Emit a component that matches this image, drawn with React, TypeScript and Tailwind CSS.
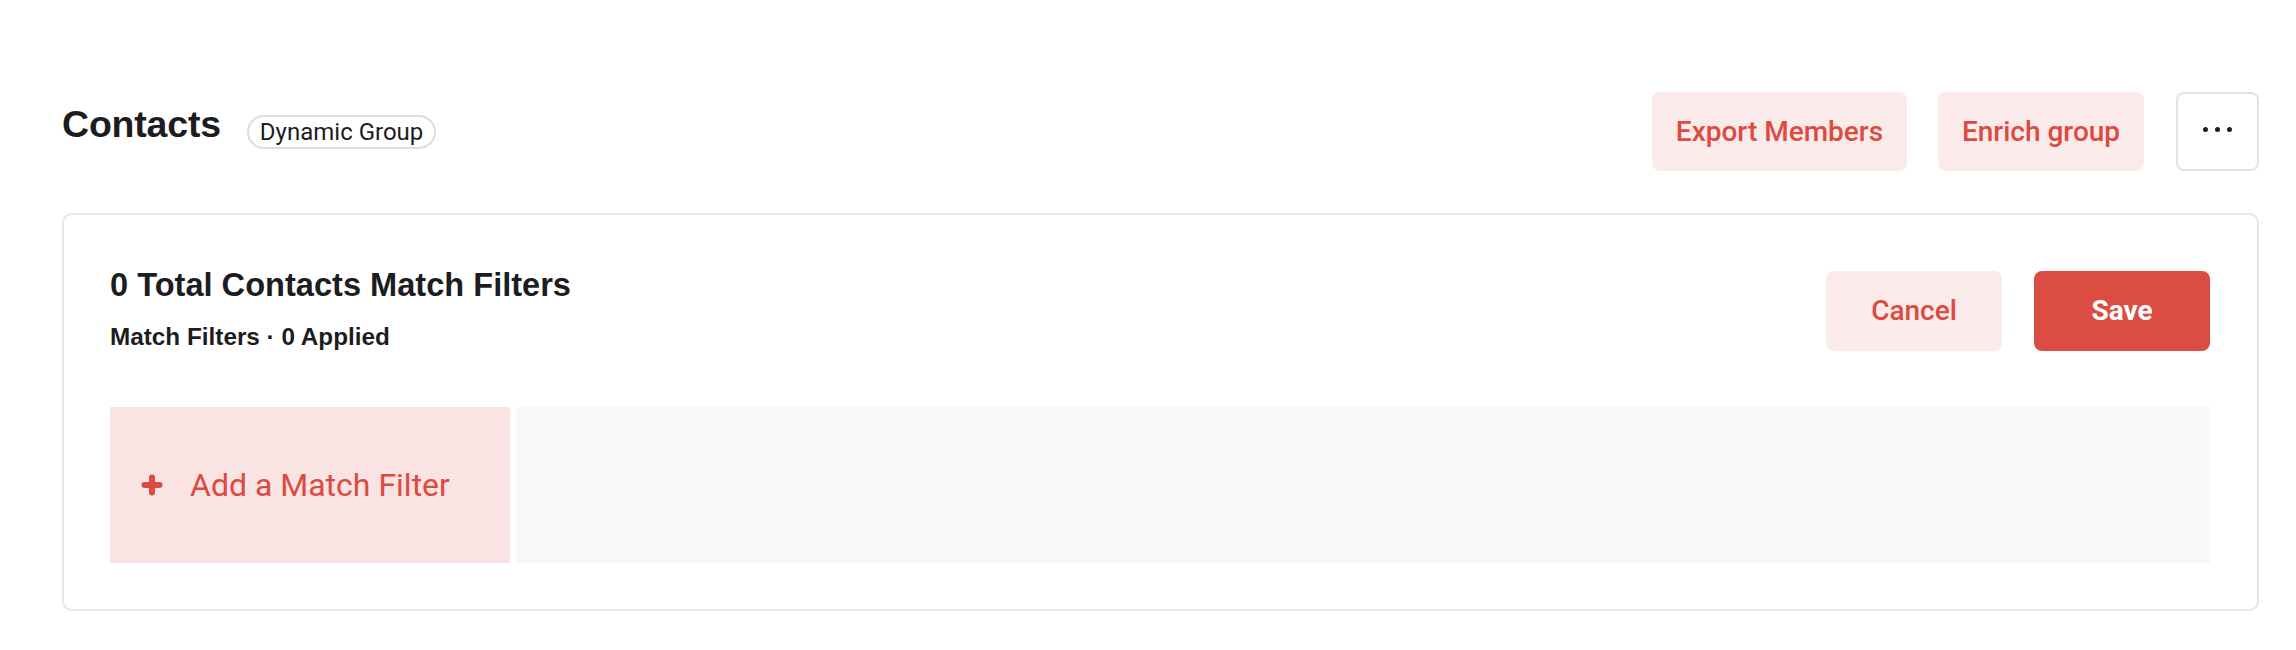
const heading = { fontFamily: '"Liberation Sans", Arial, sans-serif' };
const body = { fontFamily: 'Roboto, "Liberation Sans", sans-serif' };

function DotsIcon() {
  return (
    <div className="flex items-center gap-[7px] mb-[4px]">
      <span className="h-[5px] w-[5px] rounded-full bg-[#1f1f23]" />
      <span className="h-[5px] w-[5px] rounded-full bg-[#1f1f23]" />
      <span className="h-[5px] w-[5px] rounded-full bg-[#1f1f23]" />
    </div>
  );
}

function PlusIcon() {
  return (
    <svg width="22" height="22" viewBox="0 0 22 22" className="shrink-0">
      <path
        d="M11 3.5v15M3.5 11h15"
        stroke="#dc4a40"
        strokeWidth="6"
        strokeLinecap="round"
        fill="none"
      />
    </svg>
  );
}

export default function App() {
  return (
    <div className="min-h-[650px] bg-white pl-[62px] pr-[37px] pt-[92px]" style={body}>
      {/* Header */}
      <div className="flex h-[79px] items-center justify-between">
        <div className="flex items-center gap-[26px]">
          <h1
            className="mb-[14px] text-[37.5px] font-bold leading-none tracking-[-0.2px] text-[#1d1d1f]"
            style={heading}
          >
            Contacts
          </h1>
          <span className="flex h-[34px] items-center rounded-full border-2 border-[#dcdde3] px-[11px] text-[24px] leading-none text-[#1d1d1f]">
            Dynamic Group
          </span>
        </div>

        <div className="flex items-center gap-[32px]">
          <button className="flex h-[79px] w-[255px] items-center justify-center rounded-[8px] bg-[#fbeaea] text-[28px] font-medium text-[#dc4a40]">
            Export Members
          </button>
          <button className="-ml-[1px] flex h-[79px] w-[206px] items-center justify-center rounded-[8px] bg-[#fbeaea] text-[28px] font-medium text-[#dc4a40]">
            Enrich group
          </button>
          <button className="flex h-[79px] w-[83px] items-center justify-center rounded-[8px] border-2 border-[#e2e2e8] bg-white">
            <DotsIcon />
          </button>
        </div>
      </div>

      {/* Filter card */}
      <div className="mt-[42px] rounded-[10px] border-2 border-[#e6e6ec] pb-[46px] pl-[46px] pr-[47px] pt-[54px]">
        <div className="flex items-start justify-between">
          <div>
            <h2
              className="text-[32.6px] font-bold leading-none text-[#1d1d1f]"
              style={heading}
            >
              0 Total Contacts Match Filters
            </h2>
            <p
              className="mt-[23px] text-[24.3px] font-bold leading-none text-[#1d1d1f]"
              style={heading}
            >
              Match Filters · 0 Applied
            </p>
          </div>
          <div className="mt-[2px] flex gap-[32px]">
            <button className="flex h-[80px] w-[176px] items-center justify-center rounded-[8px] bg-[#fbeaea] text-[28px] font-medium text-[#dc4a40]">
              Cancel
            </button>
            <button className="flex h-[80px] w-[176px] items-center justify-center rounded-[8px] bg-[#db4c43] text-[28px] font-bold text-white">
              Save
            </button>
          </div>
        </div>

        <div className="mt-[56px] flex h-[156px] gap-[6px]">
          <button className="flex w-[400px] items-center gap-[27px] bg-[#f9e3e3] pl-[31px] text-[32px] leading-none text-[#dc4a40]">
            <PlusIcon />
            <span>Add a Match Filter</span>
          </button>
          <div className="flex-1 bg-[#f7f8fa]" />
        </div>
      </div>
    </div>
  );
}
